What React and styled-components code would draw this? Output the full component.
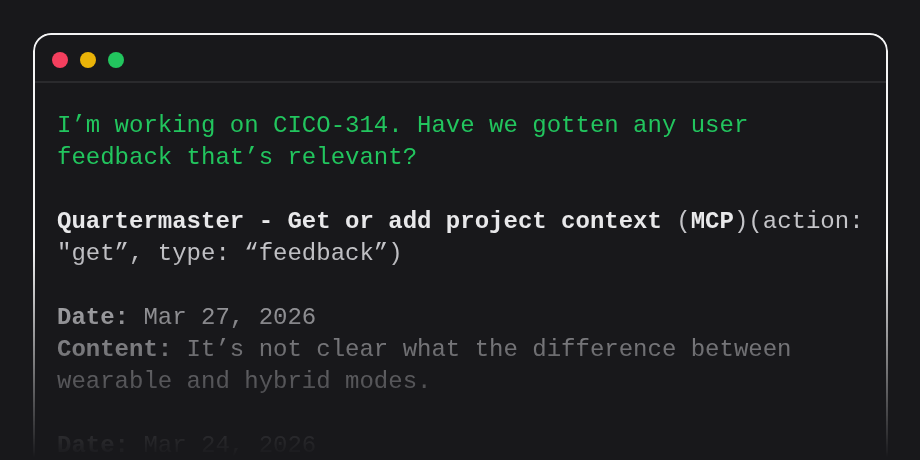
import React from "react";
import styled, { createGlobalStyle } from "styled-components";

const GlobalStyle = createGlobalStyle`
  html, body {
    margin: 0;
    padding: 0;
    background: #18181b;
    overflow: hidden;
  }
  body {
    font-family: "Liberation Mono", "DejaVu Sans Mono", monospace;
  }
`;

const Page = styled.div`
  width: 920px;
  height: 460px;
  padding: 33px 32px 0 33px;
  box-sizing: border-box;
  overflow: hidden;
`;

// whole window fades out towards the bottom of the frame
const Window = styled.div`
  border: 2px solid #f4f4f5;
  border-bottom: none;
  border-radius: 18px 18px 0 0;
  height: 520px;
  box-sizing: border-box;
  -webkit-mask-image: linear-gradient(to bottom, #000 215px, transparent 425px);
  mask-image: linear-gradient(to bottom, #000 215px, transparent 425px);
`;

const TitleBar = styled.div`
  display: flex;
  gap: 12px;
  padding: 17px 17px 13px;
  border-bottom: 2px solid #2a2a2d;
`;

const Dot = styled.span`
  width: 16px;
  height: 16px;
  border-radius: 50%;
  background: ${(p) => p.$color};
`;

const Body = styled.div`
  padding: 27px 20px 0 22px;
  font-size: 24px;
  line-height: 32px;
  color: #c4c4c8;
`;

const Block = styled.p`
  margin: 0 0 32px;
  color: ${(p) => p.$color || "inherit"};
`;

const Strong = styled.b`
  font-weight: 700;
  color: ${(p) => p.$color || "#e8e8ea"};
`;

const Line = styled.div``;

export default function App() {
  return (
    <>
      <GlobalStyle />
      <Page>
        <Window>
          <TitleBar>
            <Dot $color="#f43f5e" />
            <Dot $color="#eab308" />
            <Dot $color="#22c55e" />
          </TitleBar>
          <Body>
            <Block $color="#22c55e">
              I’m working on CICO-314. Have we gotten any user
              <br />
              feedback that’s relevant?
            </Block>
            <Block>
              <Strong>Quartermaster - Get or add project context</Strong> (
              <Strong>MCP</Strong>)(action:
              <br />
              "get”, type: “feedback”)
            </Block>
            <Block>
              <Line>
                <Strong $color="#d4d4d8">Date:</Strong> Mar 27, 2026
              </Line>
              <Line>
                <Strong $color="#d4d4d8">Content:</Strong> It’s not clear what the difference between
                <br />
                wearable and hybrid modes.
              </Line>
            </Block>
            <Block>
              <Line>
                <Strong $color="#d4d4d8">Date:</Strong> Mar 24, 2026
              </Line>
            </Block>
          </Body>
        </Window>
      </Page>
    </>
  );
}
